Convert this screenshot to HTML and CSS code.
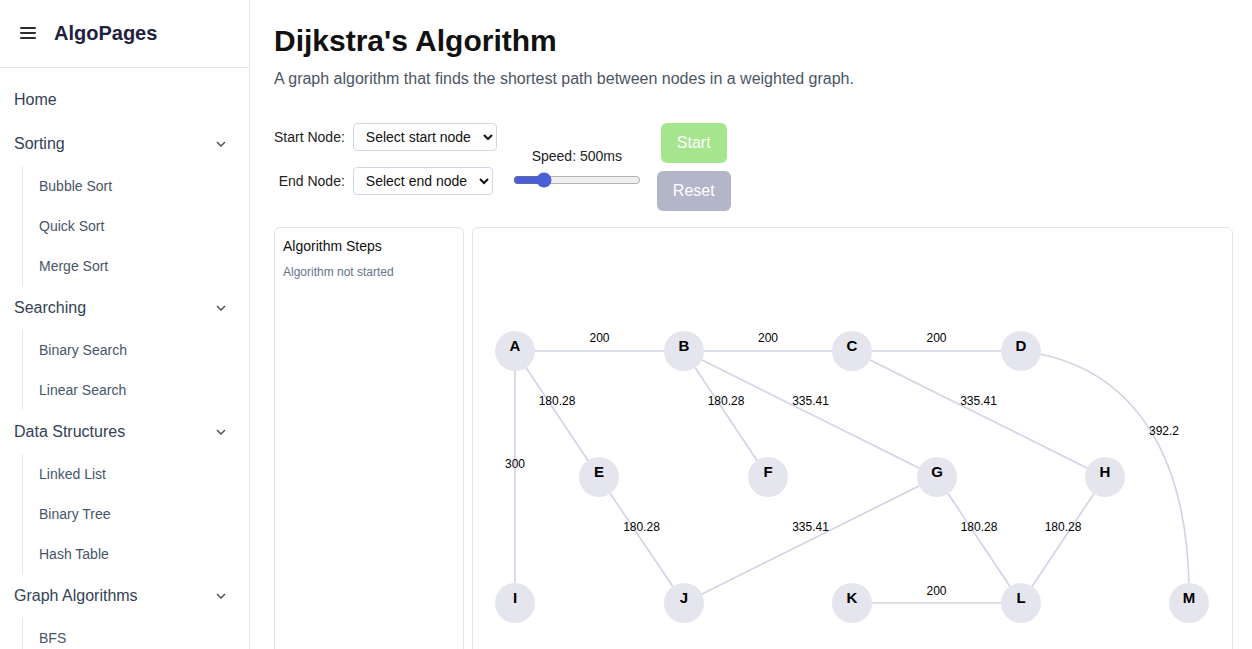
FILE: index.html
```html
<!DOCTYPE html>
<html lang="en">
<head>
<meta charset="utf-8">
<title>Dijkstra's Algorithm - AlgoPages</title>
<link rel="stylesheet" href="styles.css">
</head>
<body>
<div class="app">
  <aside class="sidebar">
    <div class="brand">
      <svg class="menu-icon" width="16" height="14" viewBox="0 0 16 14"><path d="M1 2h14M1 7h14M1 12h14" stroke="#2b2b2b" stroke-width="2" stroke-linecap="round"/></svg>
      <span class="brand-name">AlgoPages</span>
    </div>
    <nav class="nav">
      <a class="nav-item">Home</a>
      <div class="nav-item">Sorting<svg class="chev" width="10" height="6" viewBox="0 0 10 6"><polyline points="1,1 5,5 9,1" fill="none" stroke="#4b5563" stroke-width="1.5"/></svg></div>
      <div class="submenu">
        <a class="sub-item">Bubble Sort</a>
        <a class="sub-item">Quick Sort</a>
        <a class="sub-item">Merge Sort</a>
      </div>
      <div class="nav-item">Searching<svg class="chev" width="10" height="6" viewBox="0 0 10 6"><polyline points="1,1 5,5 9,1" fill="none" stroke="#4b5563" stroke-width="1.5"/></svg></div>
      <div class="submenu">
        <a class="sub-item">Binary Search</a>
        <a class="sub-item">Linear Search</a>
      </div>
      <div class="nav-item">Data Structures<svg class="chev" width="10" height="6" viewBox="0 0 10 6"><polyline points="1,1 5,5 9,1" fill="none" stroke="#4b5563" stroke-width="1.5"/></svg></div>
      <div class="submenu">
        <a class="sub-item">Linked List</a>
        <a class="sub-item">Binary Tree</a>
        <a class="sub-item">Hash Table</a>
      </div>
      <div class="nav-item">Graph Algorithms<svg class="chev" width="10" height="6" viewBox="0 0 10 6"><polyline points="1,1 5,5 9,1" fill="none" stroke="#4b5563" stroke-width="1.5"/></svg></div>
      <div class="submenu">
        <a class="sub-item">BFS</a>
        <a class="sub-item">DFS</a>
      </div>
    </nav>
  </aside>

  <main class="main">
    <h1 class="title">Dijkstra's Algorithm</h1>
    <p class="subtitle">A graph algorithm that finds the shortest path between nodes in a weighted graph.</p>

    <div class="controls">
      <div class="node-select">
        <label class="field-label">Start Node:</label>
        <select class="select"><option>Select start node</option></select>
        <label class="field-label">End Node:</label>
        <select class="select"><option>Select end node</option></select>
      </div>
      <div class="speed">
        <span class="speed-label">Speed: 500ms</span>
        <input class="range" type="range" min="100" max="2000" step="100" value="500">
      </div>
      <div class="buttons">
        <button class="btn btn-start">Start</button>
        <button class="btn btn-reset">Reset</button>
      </div>
    </div>

    <div class="panels">
      <section class="steps">
        <div class="steps-title">Algorithm Steps</div>
        <div class="steps-note">Algorithm not started</div>
      </section>
      <section class="graph">
        <svg class="graph-svg" width="760" height="500" viewBox="473 228 760 500">
          <g class="edges">
            <line x1="515" y1="351" x2="684" y2="351"/>
            <line x1="684" y1="351" x2="852" y2="351"/>
            <line x1="852" y1="351" x2="1021" y2="351"/>
            <line x1="515" y1="351" x2="599" y2="477"/>
            <line x1="684" y1="351" x2="768" y2="477"/>
            <line x1="684" y1="351" x2="937" y2="477"/>
            <line x1="852" y1="351" x2="1105" y2="477"/>
            <path d="M1021 351 C1140 365 1191 465 1189 603" fill="none"/>
            <line x1="515" y1="351" x2="515" y2="603"/>
            <line x1="599" y1="477" x2="684" y2="603"/>
            <line x1="937" y1="477" x2="684" y2="603"/>
            <line x1="937" y1="477" x2="1021" y2="603"/>
            <line x1="1105" y1="477" x2="1021" y2="603"/>
            <line x1="852" y1="603" x2="1021" y2="603"/>
          </g>
          <g class="weights">
            <text x="599.5" y="342">200</text>
            <text x="768" y="342">200</text>
            <text x="936.5" y="342">200</text>
            <text x="557" y="405">180.28</text>
            <text x="726" y="405">180.28</text>
            <text x="810.5" y="405">335.41</text>
            <text x="978.5" y="405">335.41</text>
            <text x="1164" y="435">392.2</text>
            <text x="515" y="468">300</text>
            <text x="641.5" y="531">180.28</text>
            <text x="810.5" y="531">335.41</text>
            <text x="979" y="531">180.28</text>
            <text x="1063" y="531">180.28</text>
            <text x="936.5" y="595">200</text>
          </g>
          <g class="nodes">
            <circle cx="515" cy="351" r="20"/><text x="515" y="351">A</text>
            <circle cx="684" cy="351" r="20"/><text x="684" y="351">B</text>
            <circle cx="852" cy="351" r="20"/><text x="852" y="351">C</text>
            <circle cx="1021" cy="351" r="20"/><text x="1021" y="351">D</text>
            <circle cx="599" cy="477" r="20"/><text x="599" y="477">E</text>
            <circle cx="768" cy="477" r="20"/><text x="768" y="477">F</text>
            <circle cx="937" cy="477" r="20"/><text x="937" y="477">G</text>
            <circle cx="1105" cy="477" r="20"/><text x="1105" y="477">H</text>
            <circle cx="515" cy="603" r="20"/><text x="515" y="603">I</text>
            <circle cx="684" cy="603" r="20"/><text x="684" y="603">J</text>
            <circle cx="852" cy="603" r="20"/><text x="852" y="603">K</text>
            <circle cx="1021" cy="603" r="20"/><text x="1021" y="603">L</text>
            <circle cx="1189" cy="603" r="20"/><text x="1189" y="603">M</text>
          </g>
        </svg>
      </section>
    </div>
  </main>
</div>
</body>
</html>
```

FILE: styles.css
```css
* { box-sizing: border-box; }

html, body {
  margin: 0;
  padding: 0;
  height: 100%;
  overflow: hidden;
  background: #ffffff;
  font-family: "Liberation Sans", Arial, sans-serif;
}

.app {
  display: flex;
  height: 100vh;
}

/* Sidebar */
.sidebar {
  width: 250px;
  flex: 0 0 250px;
  border-right: 1px solid #e5e7eb;
  background: #ffffff;
}

.brand {
  height: 68px;
  border-bottom: 1px solid #e5e7eb;
  display: flex;
  align-items: center;
  gap: 18px;
  padding-left: 20px;
  padding-bottom: 1px;
}

.menu-icon { display: block; }

.brand-name {
  font-size: 20px;
  font-weight: bold;
  color: #1e2240;
}

.nav {
  padding-top: 10px;
  display: flex;
  flex-direction: column;
}

.nav-item {
  display: flex;
  align-items: center;
  justify-content: space-between;
  height: 44px;
  padding: 0 23px 0 14px;
  font-size: 16px;
  color: #334155;
}

.chev { display: block; }

.submenu {
  display: flex;
  flex-direction: column;
  margin-left: 22px;
  border-left: 1px solid #e5e7eb;
  padding-left: 16px;
}

.sub-item {
  height: 40px;
  display: flex;
  align-items: center;
  font-size: 14px;
  color: #475569;
}

/* Main */
.main {
  flex: 1;
  padding: 23px 19px 0 24px;
  min-width: 0;
}

.title {
  margin: 0 0 8px;
  font-size: 30px;
  line-height: 36px;
  font-weight: bold;
  color: #111111;
}

.subtitle {
  margin: 0 0 32px;
  font-size: 16px;
  line-height: 24px;
  color: #4b5563;
}

.controls {
  display: flex;
  align-items: center;
  gap: 16px;
}

.node-select {
  align-self: flex-start;
  display: grid;
  grid-template-columns: auto auto;
  column-gap: 8px;
  row-gap: 16px;
  align-items: center;
}

.field-label {
  justify-self: end;
  font-size: 14px;
  color: #222222;
}

.select {
  justify-self: start;
  height: 28px;
  padding: 0 8px 0 8px;
  font-family: "Liberation Sans", Arial, sans-serif;
  font-size: 14px;
  color: #111111;
  background: #ffffff;
  border: 1px solid #d3d6e6;
  border-radius: 4px;
}

.speed {
  display: flex;
  flex-direction: column;
  align-items: center;
  gap: 6px;
}

.speed-label {
  font-size: 14px;
  line-height: 20px;
  color: #222222;
}

.range {
  width: 128px;
  margin: 0;
  accent-color: #4a5fd6;
}

.buttons {
  display: flex;
  flex-direction: column;
  align-items: center;
  gap: 8px;
}

.btn {
  border: none;
  border-radius: 6px;
  padding: 8px 16px;
  font-family: "Liberation Sans", Arial, sans-serif;
  font-size: 16px;
  line-height: 24px;
  color: #ffffff;
}

.btn-start { background: #a5e58e; }
.btn-reset { background: #b3b5c9; }

.panels {
  margin-top: 16px;
  display: flex;
  gap: 8px;
}

.steps {
  width: 190px;
  flex: 0 0 190px;
  height: 500px;
  border: 1px solid #e5e5ee;
  border-radius: 6px;
  padding: 8px;
}

.steps-title {
  font-size: 14px;
  line-height: 20px;
  color: #111111;
  margin-bottom: 8px;
}

.steps-note {
  font-size: 12px;
  line-height: 16px;
  color: #64748b;
}

.graph {
  flex: 1;
  height: 500px;
  border: 1px solid #e5e5ee;
  border-radius: 6px;
  overflow: hidden;
}

.graph-svg { display: block; }

.edges line,
.edges path {
  stroke: #cfd3e5;
  stroke-width: 1.6;
}

.weights text {
  font-family: "Liberation Sans", Arial, sans-serif;
  font-size: 12px;
  fill: #000000;
  text-anchor: middle;
}

.nodes circle { fill: #e5e5ed; }

.nodes text {
  font-family: "Liberation Sans", Arial, sans-serif;
  font-size: 15px;
  font-weight: bold;
  fill: #000000;
  text-anchor: middle;
}
```
